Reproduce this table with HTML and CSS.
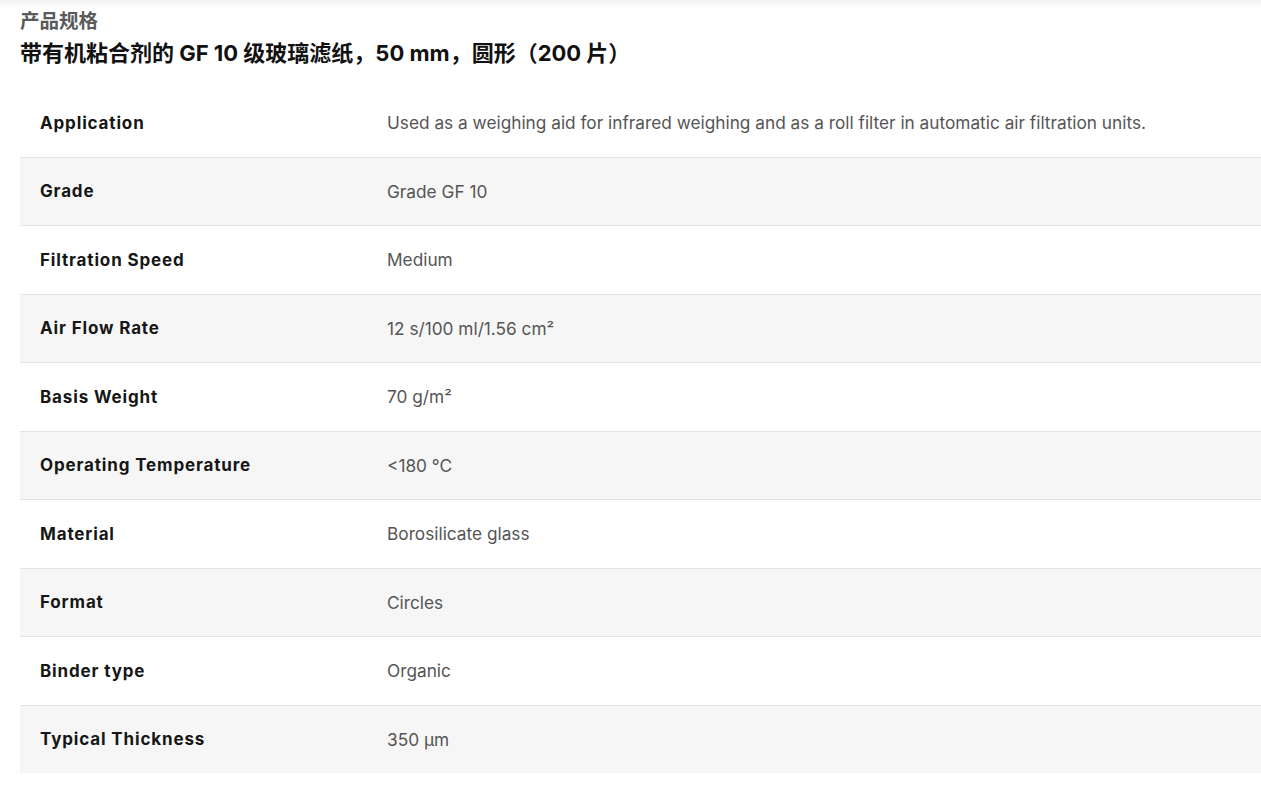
FILE: index.html
```html
<!DOCTYPE html>
<html lang="zh">
<head>
<meta charset="utf-8">
<title>产品规格</title>
<link rel="stylesheet" href="styles.css">
</head>
<body>
<div class="page">
  <header class="head">
    <div class="eyebrow">产品规格</div>
    <h1 class="title">带有机粘合剂的 GF 10 级玻璃滤纸，50 mm，圆形（200 片）</h1>
  </header>
  <div class="specs">
    <div class="row"><div class="label">Application</div><div class="value">Used as a weighing aid for infrared weighing and as a roll filter in automatic air filtration units.</div></div>
    <div class="row"><div class="label">Grade</div><div class="value">Grade GF 10</div></div>
    <div class="row"><div class="label">Filtration Speed</div><div class="value">Medium</div></div>
    <div class="row"><div class="label">Air Flow Rate</div><div class="value">12 s/100 ml/1.56 cm²</div></div>
    <div class="row"><div class="label">Basis Weight</div><div class="value">70 g/m²</div></div>
    <div class="row"><div class="label">Operating Temperature</div><div class="value">&lt;180 °C</div></div>
    <div class="row"><div class="label">Material</div><div class="value">Borosilicate glass</div></div>
    <div class="row"><div class="label">Format</div><div class="value">Circles</div></div>
    <div class="row"><div class="label">Binder type</div><div class="value">Organic</div></div>
    <div class="row"><div class="label">Typical Thickness</div><div class="value">350 µm</div></div>
  </div>
</div>
</body>
</html>
```

FILE: styles.css
```css
html, body {
  margin: 0;
  padding: 0;
  background: #ffffff;
}
body {
  font-family: Inter, "Noto Sans CJK SC", sans-serif;
  color: #1a1a1a;
}
.page {
  padding: 8px 0 0 20px;
  background: linear-gradient(to bottom, #f2f2f2 0px, #ffffff 9px);
  min-height: 777px;
}
.head {
  display: flex;
  flex-direction: column;
}
.eyebrow {
  font-family: Roboto, "Noto Sans CJK SC", sans-serif;
  font-size: 19.5px;
  font-weight: 700;
  line-height: 26px;
  color: #5a5a5a;
  padding-top: 1px;
}
.title {
  margin: 0;
  font-family: Inter, "Noto Sans CJK SC", sans-serif;
  font-size: 22px;
  font-weight: 700;
  line-height: 36px;
  color: #111111;
}
.specs {
  margin-top: 18px;
  display: flex;
  flex-direction: column;
}
.row {
  display: grid;
  grid-template-columns: 367px 1fr;
  height: 67.5px;
  align-items: center;
  border-bottom: 1px solid #e3e3e3;
  box-sizing: content-box;
}
.row:nth-child(even) {
  background: #f6f6f6;
}
.row:last-child {
  border-bottom: none;
}
.label {
  padding-left: 20px;
  font-size: 17px;
  font-weight: 700;
  letter-spacing: 0.85px;
  color: #161616;
}
.value {
  font-size: 17.25px;
  color: #555555;
}
```
